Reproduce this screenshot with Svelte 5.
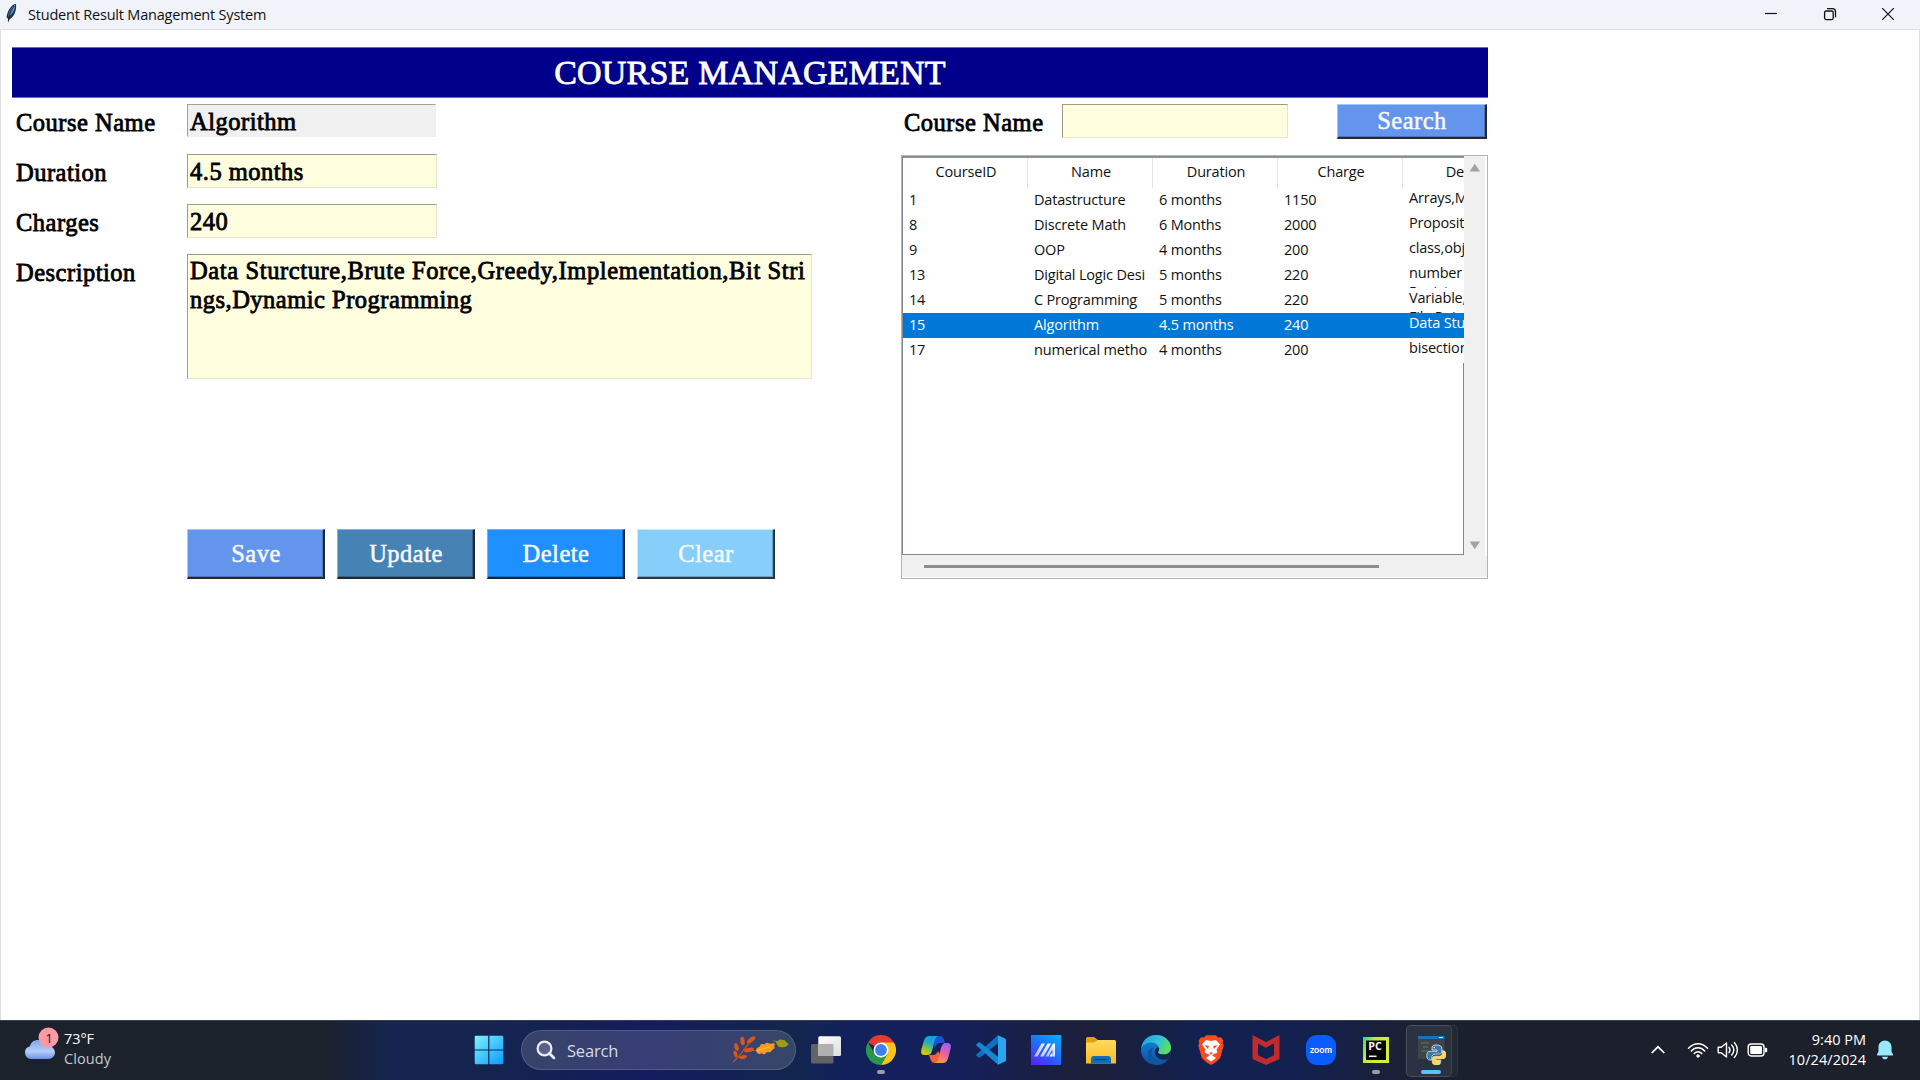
<script>
  const columns = ['CourseID', 'Name', 'Duration', 'Charge', 'Description'];
  const rows = [
    ['1', 'Datastructure', '6 months', '1150', 'Arrays,Mat'],
    ['8', 'Discrete Math', '6 Months', '2000', 'Propositional'],
    ['9', 'OOP', '4 months', '200', 'class,object'],
    ['13', 'Digital Logic Desi', '5 months', '220', 'number s\nRegisters'],
    ['14', 'C Programming', '5 months', '220', 'Variable,s\nFile Pointer'],
    ['15', 'Algorithm', '4.5 months', '240', 'Data Sturcture'],
    ['17', 'numerical metho', '4 months', '200', 'bisection']
  ];
  const selected = '15';
  const actions = ['Save', 'Update', 'Delete', 'Clear'];
</script>

<div class="screen">
  <header class="titlebar">
    <svg class="feather" width="14" height="22" viewBox="0 0 14 22">
      <path d="M11 1C7 1 2.500 7 1.500 14l1.600 2 .5 4 .8-3.500C8.500 14.500 12 8 11 1z" fill="#243142" />
      <path d="M10.300 2C7 3 4 8 3 14c3.500-2 7-6 7.300-12z" fill="#4f8ccb" />
      <path d="M9.500 3C6 6 4 12 3.300 18" fill="none" stroke="#17202c" stroke-width=".9" />
    </svg>
    <span class="caption">Student Result Management System</span>
    <div class="controls">
      <svg width="14" height="14" viewBox="0 0 14 14"><path d="M1 6.500h12" stroke="#111" stroke-width="1.200" /></svg>
      <svg width="14" height="14" viewBox="0 0 14 14" fill="none" stroke="#111" stroke-width="1.300"><rect x="1.600" y="4" width="8.600" height="8.600" rx="1.500" /><path d="M4 1.700h5.500q3 0 3 3v5.600" /></svg>
      <svg width="14" height="14" viewBox="0 0 14 14"><path d="M1.200 1.200l11.600 11.600M12.800 1.200L1.200 12.800" stroke="#111" stroke-width="1.200" /></svg>
    </div>
  </header>

  <main>
    <h1><span>COURSE MANAGEMENT</span></h1>
    <div class="content">
      <section class="left">
        <div class="form">
          <span class="label">Course Name</span>
          <div class="entry readonly">Algorithm</div>
          <span class="label">Duration</span>
          <div class="entry">4.5 months</div>
          <span class="label">Charges</span>
          <div class="entry">240</div>
          <span class="label">Description</span>
          <div class="entry area"><span class="first">Data Sturcture,Brute Force,Greedy,Implementation,Bit Stri</span><br />ngs,Dynamic Programming</div>
        </div>
        <div class="actions">
          {#each actions as action}
            <button class={action.toLowerCase()}><span>{action}</span></button>
          {/each}
        </div>
      </section>

      <section class="right">
        <div class="searchrow">
          <span class="label">Course Name</span>
          <div class="entry"></div>
          <button class="search"><span>Search</span></button>
        </div>
        <div class="frame">
          <div class="tree">
            <div class="row head">
              {#each columns as column}<div class="cell">{column}</div>{/each}
            </div>
            {#each rows as row}
              <div class="row" class:selected={row[0] === selected}>
                {#each row as value, i}<div class="cell" class:desc={i === 4}>{value}</div>{/each}
              </div>
            {/each}
            <div class="blank"></div>
          </div>
          <div class="vbar">
            <svg width="12" height="9" viewBox="0 0 12 9"><path d="M5.800.8L11 8.500H.6z" fill="#a3a3a3" /></svg>
            <svg width="12" height="9" viewBox="0 0 12 9"><path d="M.6.5H11L5.800 8.200z" fill="#a3a3a3" /></svg>
          </div>
          <div class="hbar"><div class="thumb"></div></div>
        </div>
      </section>
    </div>
  </main>

  <footer class="taskbar">
    <div class="weather">
      <svg width="36" height="36" viewBox="0 0 36 36">
        <defs><linearGradient id="cl" x1="0" y1="0" x2="0" y2="1"><stop offset="0" stop-color="#7fa6ec" /><stop offset=".6" stop-color="#b4cefa" /><stop offset="1" stop-color="#6c94e2" /></linearGradient></defs>
        <path d="M8 32a6.500 6.500 0 0 1-1-12.800C8 15 11 13 15 13c4 0 7 2 9 6h1.500a6.500 6.500 0 0 1 0 13z" fill="url(#cl)" />
        <circle cx="25.500" cy="10.500" r="10" fill="#ff99a4" />
        <text x="26" y="15.500" text-anchor="middle" font-family="Open Sans, sans-serif" font-size="13.500" fill="#25161a">1</text>
      </svg>
      <div class="wtext"><span>73°F</span><span class="dim">Cloudy</span></div>
    </div>

    <div class="apps">
      <svg class="start" width="30" height="30" viewBox="0 0 30 30">
        <defs><linearGradient id="win" x1="0" y1="0" x2="1" y2="1"><stop offset="0" stop-color="#7cf2ff" /><stop offset="1" stop-color="#0a9bff" /></linearGradient></defs>
        <path d="M2 .8h12.200v13.600H.7V2Q.7.8 2 .8zM15.400.8H28q1.300 0 1.300 1.200v12.400H15.400zM.7 15.600h13.500v13.700H2q-1.300 0-1.300-1.300zM15.400 15.600h13.900V28q0 1.300-1.300 1.300H15.400z" fill="url(#win)" />
      </svg>
      <div class="pill">
        <svg width="20" height="20" viewBox="0 0 20 20"><circle cx="8.500" cy="8.500" r="6.900" fill="#59628a" stroke="#eceef5" stroke-width="2.200" /><path d="M13.500 13.500l4.500 4.500" stroke="#eceef5" stroke-width="2.600" stroke-linecap="round" /></svg>
        <span>Search</span>
        <svg class="leaves" width="58" height="28" viewBox="0 0 58 28">
          <path d="M1 26C8 21 12 13 17 7" fill="none" stroke="#c4501c" stroke-width="1.400" />
          <g fill="#d9541e">
            <ellipse cx="10.500" cy="5" rx="2.200" ry="4.200" transform="rotate(-8 10.500 5)" /><ellipse cx="19" cy="4" rx="2.200" ry="5" transform="rotate(52 19 4)" />
            <ellipse cx="4.500" cy="11" rx="2.100" ry="4" transform="rotate(-18 4.500 11)" /><ellipse cx="17" cy="14" rx="2.100" ry="5" transform="rotate(77 17 14)" />
            <ellipse cx="3.500" cy="18" rx="1.800" ry="3.500" transform="rotate(-18 3.500 18)" /><ellipse cx="11" cy="21" rx="1.900" ry="4" transform="rotate(80 11 21)" />
          </g>
          <path d="M19 15l5-.5c1-5 4-2.500 4-4.500 2-4 4 0 6-3 3-1 3 2 8 0 2 2-1 3 1 5-2 2-3 1-4 4-3 1-4-1-6 2-3 1-3-2-5 0-3 0-3-2-4-3z" fill="#f59a24" />
          <path d="M25 14.500l13-3.500" stroke="#ffc45c" stroke-width="1" />
          <path d="M40 4.500l6 .5c2-3 4-.5 5-1 3 0 2 2 6 4-2 1-2 3-5 3-3 1-7 0-8-5z" fill="#a09a16" />
        </svg>
      </div>

      <div class="app"><svg width="30" height="30" viewBox="0 0 30 30">
        <defs><linearGradient id="tv" x1="0" y1="0" x2="1" y2="1"><stop offset="0" stop-color="#fff" /><stop offset="1" stop-color="#ddd" /></linearGradient></defs>
        <rect x="0" y="9" width="22.500" height="19.500" rx="1.500" fill="#636363" /><rect x="7.300" y="1.300" width="22.700" height="19.700" rx="1.500" fill="url(#tv)" /><path d="M7.300 9h15.200v12H7.300z" fill="#b0b0b0" />
      </svg></div>

      <div class="app"><svg width="30" height="30" viewBox="0 0 30 30">
        <path d="M15 15L2 7.500A15 15 0 0 1 28 7.500z" fill="#e33b2e" />
        <path d="M28 7.500A15 15 0 0 1 15 30l6.500-11.200L15 7.500z" fill="#fcc31e" /><path d="M2 7.500A15 15 0 0 0 15 30l6.500-11.200-13 0z" fill="#279847" />
        <circle cx="15" cy="15" r="7.500" fill="#fff" /><circle cx="15" cy="15" r="5.900" fill="#3f80ee" />
      </svg><i class="dot"></i></div>

      <div class="app"><svg width="30" height="30" viewBox="0 0 30 30">
        <defs>
          <linearGradient id="cp1" x1=".6" y1="0" x2=".2" y2="1"><stop offset="0" stop-color="#139fe9" /><stop offset=".35" stop-color="#22a9c7" /><stop offset=".7" stop-color="#8bc63a" /><stop offset="1" stop-color="#f0c900" /></linearGradient>
          <linearGradient id="cp2" x1=".7" y1="0" x2=".3" y2="1"><stop offset="0" stop-color="#9b62ff" /><stop offset=".5" stop-color="#ea5f9e" /><stop offset="1" stop-color="#ff9a44" /></linearGradient>
        </defs>
        <path d="M9 1h9c3 0 4 1 5 4l1 3h-5c-3 0-4 2-5 5z" fill="#1d50d8" />
        <path d="M20 28h-6c-3 0-4-2-5-5l-1-3h4c3 0 4-2 5-4l4 7z" fill="#f4623a" />
        <path d="M8 1h9c-2 1-3 3-4 7l-2 8c-1 3-2 4-5 4H3.500C0 20-.3 17.500.5 14L3 5.500C4 2.500 5.500 1 8 1z" fill="url(#cp1)" />
        <path d="M22 28h-8c2-1 3-3 4-7l2-8c1-3 2-5 5-5h1.500c3.500 0 3.800 2.500 3 6L27 23.500C26 26.500 24.500 28 22 28z" fill="url(#cp2)" />
      </svg></div>

      <div class="app"><svg width="30" height="30" viewBox="0 0 30 30">
        <path d="M22 .3L29 3.500q1 .5 1 1.500v20q0 1-1 1.500l-7 3.200z" fill="#2aa5f0" />
        <path d="M22 .3v8L4 22.500q-.8.600-1.500 0L.6 20.800q-.9-.8 0-1.600z" fill="#0a73bd" />
        <path d="M22 29.700v-8L4 7.500q-.8-.6-1.500 0L.6 9.200q-.9.800 0 1.600z" fill="#1687d2" />
      </svg></div>

      <div class="app"><svg width="30" height="30" viewBox="0 0 30 30">
        <defs>
          <linearGradient id="ma" x1=".1" y1="1" x2=".8" y2="0"><stop offset="0" stop-color="#5a1fff" /><stop offset=".5" stop-color="#2468ff" /><stop offset="1" stop-color="#07a7fb" /></linearGradient>
          <linearGradient id="mb" x1="1" y1="0" x2="0" y2="1"><stop offset="0" stop-color="#fff" /><stop offset="1" stop-color="#a9b4ff" /></linearGradient>
        </defs>
        <path d="M0 0h30v30H0z" fill="url(#ma)" />
        <path d="M3 21.500L10.500 8.500H14L6.500 21.500zM9 21.500L16.500 8.500H20L12.500 21.500z" fill="url(#mb)" />
        <path d="M14.500 21.500L22 8.500h2v13h-2.500V14l-4 7.500z" fill="url(#mb)" /><path d="M18.500 21.500l2-3h1v3z" fill="#fff" />
      </svg></div>

      <div class="app"><svg width="30" height="30" viewBox="0 0 30 30">
        <defs><linearGradient id="fo" x1="0" y1="0" x2="0" y2="1"><stop offset="0" stop-color="#ffd95e" /><stop offset="1" stop-color="#fcbc23" /></linearGradient></defs>
        <path d="M0 3.500Q0 2 1.500 2H8l4 3v4H0z" fill="#e3a007" />
        <path d="M0 7.500h8.500L12 5h16.500Q30 5 30 6.500V28.500H0z" fill="url(#fo)" />
        <path d="M5 28.500V24q0-3 3-3h14q3 0 3 3v4.500z" fill="#0d6fc0" /><path d="M9 24.500h12" stroke="#0b3d75" stroke-width="1.300" />
      </svg></div>

      <div class="app"><svg width="30" height="30" viewBox="0 0 30 30">
        <defs>
          <linearGradient id="e1" x1="0" y1=".2" x2="1" y2=".6"><stop offset="0" stop-color="#1fa0e3" /><stop offset=".5" stop-color="#2fc1d8" /><stop offset="1" stop-color="#5fe05a" /></linearGradient>
          <linearGradient id="e2" x1="0" y1="0" x2="0" y2="1"><stop offset="0" stop-color="#128bd8" /><stop offset="1" stop-color="#0c4fa4" /></linearGradient>
        </defs>
        <circle cx="15" cy="15" r="15" fill="url(#e2)" />
        <path d="M.3 13C1.500 5 7.500 0 15 0c9 0 15 6.500 15 12.500 0 4.500-3.500 7-7.500 7-3 0-5.500-1-5.500-2.300 0-.9 1.200-1.500 1.200-3.400C18.200 10.500 14.500 7.500 10 7.500c-4 0-7.500 2-9.700 5.500z" fill="url(#e1)" />
        <path d="M13.500 12.500C10 15 9.500 21 14 24.500c4.500 3.500 10 1.800 13.500-.8C25 27.500 21 30 16 30 10 29 6 25 6.500 19.500c.3-4 3.500-6.800 7-7z" fill="#0e559f" />
        <path d="M18.200 13.800c0 1.900-1.200 2.500-1.200 3.400 0 1.300 2.500 2.300 5.500 2.300 3 0 5.500-1 7.300-3.500.6 3-.8 5.500-2.300 7.700-3.500 1.600-8.500 1.300-11.500-1.700-3.200-3.500-2.700-7.700.2-9.500 1.300-.3 2 .3 2 1.300z" fill="#172552" />
      </svg></div>

      <div class="app"><svg width="30" height="30" viewBox="0 0 30 30">
        <path d="M8 2.500L10 .3h10l2 2.200 3-.2 2.300 3.200-.6 2.500 1 2.500-3.500 12.500L20 27l-5 3-5-3-4.200-4L2.300 10.500l1-2.500-.6-2.500L5 2.300z" fill="#fb4a20" />
        <path d="M10 5l5 1 5-1 4 4.500-3.500 5 1 3L16 20l4 3-5 3.500L10 23l4-3-5.500-2.500 1-3L6 9.500z" fill="#fff" />
        <path d="M8.500 10l4.500 1-1 3zM21.500 10L17 11l1 3zM13 17.500h4L15 20z" fill="#fb4a20" />
      </svg></div>

      <div class="app"><svg width="30" height="30" viewBox="0 0 30 30"><path d="M1.500 0L15 7 28.500 0v24L15 30 1.500 24zM7 8.500v11.800l8 3.800 8-3.800V8.500L15 12.700z" fill="#c12b2d" fill-rule="evenodd" /></svg></div>

      <div class="app"><svg width="30" height="30" viewBox="0 0 30 30"><rect width="30" height="30" rx="11" fill="#0b5cff" /><text x="15" y="17.500" text-anchor="middle" font-family="Lato, sans-serif" font-weight="700" font-size="8.500" fill="#fff" textLength="22" lengthAdjust="spacingAndGlyphs">zoom</text></svg></div>

      <div class="app"><svg width="30" height="30" viewBox="0 0 30 30">
        <defs><linearGradient id="pc" x1="0" y1="0" x2="1" y2=".5"><stop offset="0" stop-color="#23dc7c" /><stop offset=".4" stop-color="#c4ea3a" /><stop offset="1" stop-color="#d9ee36" /></linearGradient></defs>
        <path d="M2 2h26v26H2z" fill="url(#pc)" /><path d="M5 5.500h20V25H5z" fill="#060606" />
        <text x="7.300" y="15.300" font-family="Open Sans, sans-serif" font-weight="700" font-size="10.500" fill="#fff" textLength="13.500" lengthAdjust="spacingAndGlyphs">PC</text><path d="M8 21.300h7.500" stroke="#fff" stroke-width="1.500" />
      </svg><i class="dot"></i></div>

      <div class="app active"><svg width="30" height="30" viewBox="0 0 30 30">
        <path d="M2 1h26.500v23H2z" fill="#40434a" /><path d="M2 1h26.500v3H2z" fill="#1673b4" /><path d="M23 2.500h4" stroke="#cfe3f5" />
        <path d="M5 8h8M7 12h5M5 16h8" stroke="#3f8c46" stroke-width="1.100" />
        <path d="M20 10c-4 0-4 1.800-4 4v1h5v1.300h-7c-2.500 0-3.200 2-3.200 4.400s1 4.300 3 4.300h2v-2.500c0-2 1.500-3.500 3.500-3.500h4c1.600 0 2.600-1.300 2.600-2.800V14c0-3-2-4-5.900-4z" fill="#3878ad" stroke="#eee" stroke-width=".8" />
        <path d="M20.500 30c4 0 4.200-1.800 4.200-4v-1h-5v-1.300h7c2.500 0 3.300-1.800 3.300-4.200s-1-3.700-2.600-3.700h-1v2.200c0 2-1.500 3.200-3.500 3.200h-4c-1.600 0-2.600 1.200-2.600 2.800v3c0 2 1.500 3 4.200 3z" fill="#ffdb4c" stroke="#eee" stroke-width=".6" />
        <circle cx="18.300" cy="12.500" r=".8" fill="#fff" />
      </svg><i class="dot on"></i></div>
    </div>

    <div class="tray">
      <svg width="16" height="10" viewBox="0 0 16 10"><path d="M1.700 8L8 1.800 14.300 8" fill="none" stroke="#fff" stroke-width="1.700" /></svg>
      <svg class="wifi" width="22" height="16" viewBox="0 0 22 16" fill="none" stroke="#fff" stroke-width="1.500" stroke-linecap="round"><path d="M1.500 6.200C7 .2 15 .2 20.500 6.200M4.300 9c3.900-4.200 9.500-4.200 13.400 0M7.200 11.600c2.200-2.400 5.400-2.400 7.600 0" /><circle cx="11" cy="14" r="1.300" fill="#fff" stroke-width=".8" /></svg>
      <svg class="vol" width="22" height="18" viewBox="0 0 22 18" fill="none" stroke="#fff" stroke-width="1.400" stroke-linejoin="round" stroke-linecap="round"><path d="M1.200 6.300h3L9.500 2v14l-5.300-4.300h-3zM12 6.300c1.200 1.600 1.200 3.800 0 5.400M14.700 4c2.600 3 2.600 7 0 10M17.400 1.500c4 4.500 4 10.500 0 15" /></svg>
      <svg class="bat" width="22" height="14" viewBox="0 0 22 14"><rect x="1.200" y="1" width="15.800" height="12" rx="3" fill="none" stroke="#fff" stroke-width="1.400" /><rect x="3.200" y="3" width="11.800" height="8" rx="1.200" fill="#fff" /><path d="M18 4.800h1.200q1 0 1 1v2.400q0 1-1 1H18z" fill="#fff" /></svg>
      <div class="clock"><span class="time">9:40 PM</span><span class="date">10/24/2024</span></div>
      <svg class="bell" width="18" height="20" viewBox="0 0 18 20"><path d="M9 .5c4 0 6.500 3 6.500 6.500v4.500l1.500 3q.3 1-.7 1H1.700q-1 0-.7-1l1.500-3V7C2.500 3.500 5 .5 9 .5zM6 16.700h6c-.3 1.600-1.500 2.600-3 2.600s-2.700-1-3-2.600z" fill="#98e8ff" /></svg>
    </div>
  </footer>
</div>

<style>
  :global(body) { background: #fff; overflow: hidden; }
  * { box-sizing: border-box; }
  .screen { width: 1920px; height: 1080px; display: flex; flex-direction: column; font-family: 'Open Sans', 'Noto Sans', sans-serif; color: #111; }
  .titlebar { height: 30px; display: flex; align-items: center; background: #f0f3fa; border-bottom: 1px solid #dcdee2; padding-left: 5px; }
  .feather { margin-top: -1px; }
  .caption { margin-left: 9px; font-size: 14.5px; line-height: 28px; letter-spacing: -0.2px; white-space: nowrap; }
  .controls { margin-left: auto; display: flex; gap: 44.5px; padding-right: 25px; margin-top: -1px; }
  main { flex: 1; background: #fff; border: solid #dedede; border-width: 0 1px; padding: 17px 0 0 11px; font-family: 'Liberation Serif', serif; font-size: 24.5px; letter-spacing: 0.5px; -webkit-text-stroke: 0.8px; }
  h1 { margin: 0; width: 1476px; height: 51px; background: #00008b; border: solid #6868b8; border-width: 1px 0; color: #fff; font-size: 34px; font-weight: 400; line-height: 49px; text-align: center; white-space: nowrap; letter-spacing: 0.2px; }
  .content { display: flex; }
  .left { width: 889px; padding-left: 4px; }
  .form { display: grid; grid-template-columns: 171px auto; justify-content: start; }
  .label { line-height: 50px; height: 50px; white-space: nowrap; color: #000; }
  .entry { margin-top: 6px; width: 250px; height: 34px; background: #ffffe0; border: 1px solid #e6e6cc; border-top: 1px solid #9c9c8c; border-left: 1px solid #9c9c8c; padding-left: 2px; line-height: 33px; white-space: nowrap; color: #000; }
  .readonly { background: #f0f0f0; border-color: #a0a0a0 #f0f0f0 #f0f0f0 #a0a0a0; width: 249px; height: 33px; }
  .area { width: 625px; height: 125px; line-height: 29px; padding-top: 1px; }
  .first { letter-spacing: 0.62px; }
  .actions { display: flex; gap: 12px; margin: 150px 0 0 171px; }
  button { font: inherit; letter-spacing: inherit; color: #f8f8ff; padding: 0 0 0 1px; border-style: solid; border-width: 1px 2px 2px 1px; width: 138px; height: 50px; text-align: center; border-radius: 0; box-shadow: inset -1px -1px 0 #00000038; -webkit-text-stroke: 0.5px; }
  .save, .search { background: #6495ed; border-color: #a0c8ff #222933 #222933 #a0c8ff; }
  .update { background: #4682b4; border-color: #7fb2e6 #1f2830 #1f2830 #7fb2e6; }
  .delete { background: #1e90ff; border-color: #62b4ff #182634 #182634 #62b4ff; }
  .clear { background: #87cefa; border-color: #b5f4ff #2b373e #2b373e #b5f4ff; }
  button.search { width: 150px; height: 35px; margin: 6px 0 0 49px; line-height: 30px; }
  .searchrow { display: flex; height: 57px; padding-left: 3px; }
  .searchrow .label { width: 158px; }
  .searchrow .entry { width: 226px; }
  .frame { width: 587px; height: 424px; border: 1px solid #b4b4b4; display: grid; grid-template: 400px 22px / 562px 23px; background: #f0f0f0; font: 14.5px 'Open Sans', sans-serif; -webkit-text-stroke: 0; }
  .tree { background: #fff; border: 1px solid #828790; border-top: 2px solid #8c9098; border-right: 0; overflow: hidden; display: flex; flex-direction: column; height: 399px; }
  .row { display: grid; grid-template-columns: repeat(4, 125px) 160px; height: 25px; color: #111; flex: none; }
  .cell { padding-left: 6px; line-height: 24px; height: 25px; overflow: hidden; letter-spacing: -0.18px; white-space: pre; }
  .cell.desc { line-height: 19px; }
  .head { height: 30px; }
  .head .cell { height: 30px; line-height: 28px; text-align: center; padding: 0 0 0 2px; border-right: 1px solid #e5e5e5; }
  .selected { background: #0078d7; color: #fff; }
  .blank { flex: 1; border-right: 1px solid #828790; }
  .vbar { display: flex; flex-direction: column; justify-content: space-between; align-items: center; padding: 7px 0 6px 1px; border-right: 2px solid #fff; }
  .hbar { grid-column: 1 / 3; padding: 9px 0 0 22px; border-bottom: 1px solid #fff; }
  .thumb { width: 455px; height: 3px; background: #8e8e8e; }

  .taskbar { height: 60px; border-top: 1px solid #3a404c; display: flex; color: #fff; font-size: 14.5px;
    background: linear-gradient(90deg, #1c222b 0, #1c222b 320px, #14244e 390px, #14244f 500px, #141c5e 650px, #13264e 790px, #12205c 850px, #15205a 960px, #1c1f38 1090px, #12214f 1200px, #13204f 1300px, #1b2036 1400px, #1b202c 1480px, #1b202b 100%); }
  .weather { display: flex; width: 474px; padding: 6px 0 0 23px; }
  .wtext { display: flex; flex-direction: column; line-height: 20px; margin: 2px 0 0 5px; letter-spacing: -0.1px; }
  .dim { color: #c5c8cc; letter-spacing: 0.1px; }
  .apps { display: flex; align-items: center; height: 58px; }
  .start { margin-right: 17px; }
  .pill { width: 275px; height: 40px; border-radius: 20px; background: #ffffff26; border: 1px solid #ffffff24; display: flex; align-items: center; padding-left: 14px; margin-right: 2px; font-size: 16.5px; color: #d8dbe6; }
  .pill span { margin-left: 11px; letter-spacing: -0.2px; }
  .leaves { margin-left: auto; margin-right: 5px; }
  .app { width: 55px; height: 58px; display: flex; align-items: center; justify-content: center; position: relative; }
  .dot { position: absolute; bottom: 5px; left: 23.5px; width: 8px; height: 4px; border-radius: 2px; background: #9a9dab; }
  .dot.on { width: 20px; left: 17.5px; background: #4cc2ff; }
  .active::before { content: ''; position: absolute; left: 3px; top: 4px; width: 50px; height: 50px; border-radius: 5px; border: 1px solid #ffffff10; background: #ffffff08; }
  .active::after { content: ''; position: absolute; left: 3px; top: 4px; width: 44px; height: 50px; border-radius: 5px; border: 1px solid #ffffff18; background: #ffffff0c; z-index: 0; }
  .active svg { z-index: 1; }
  .tray { margin-left: auto; display: flex; align-items: center; height: 58px; padding-right: 26px; }
  .wifi { margin-left: 21px; }
  .vol { margin-left: 8px; }
  .bat { margin-left: 8px; }
  .clock { display: flex; flex-direction: column; text-align: right; line-height: 20px; width: 97px; letter-spacing: 0.05px; }
  .time { letter-spacing: 0; }
  .bell { margin-left: 10px; }
</style>
